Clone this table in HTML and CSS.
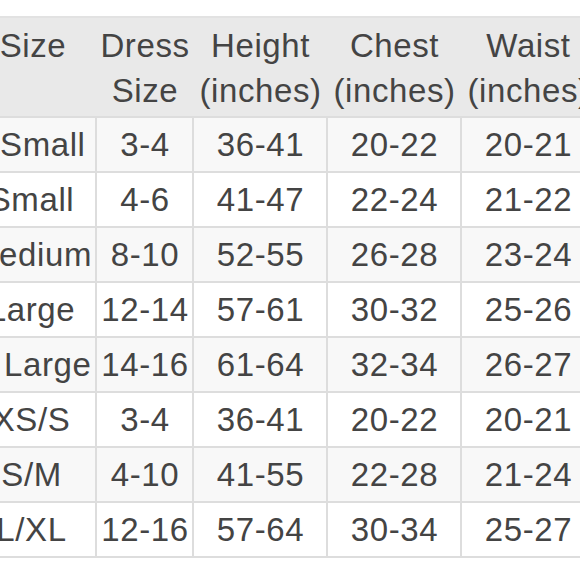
FILE: index.html
```html
<!DOCTYPE html>
<html>
<head>
<meta charset="utf-8">
<link rel="stylesheet" href="styles.css">
</head>
<body>
<div class="viewport">
<table class="chart">
  <colgroup>
    <col class="c1"><col class="c2"><col class="c3"><col class="c4"><col class="c5">
  </colgroup>
  <thead>
    <tr>
      <th>Size</th>
      <th>Dress<br>Size</th>
      <th>Height<br>(inches)</th>
      <th>Chest<br>(inches)</th>
      <th>Waist<br>(inches)</th>
    </tr>
  </thead>
  <tbody>
    <tr><td>XSmall</td><td>3-4</td><td>36-41</td><td>20-22</td><td>20-21</td></tr>
    <tr><td>Small</td><td>4-6</td><td>41-47</td><td>22-24</td><td>21-22</td></tr>
    <tr><td>Medium</td><td>8-10</td><td>52-55</td><td>26-28</td><td>23-24</td></tr>
    <tr><td>Large</td><td>12-14</td><td>57-61</td><td>30-32</td><td>25-26</td></tr>
    <tr><td>X Large</td><td>14-16</td><td>61-64</td><td>32-34</td><td>26-27</td></tr>
    <tr><td>XS/S</td><td>3-4</td><td>36-41</td><td>20-22</td><td>20-21</td></tr>
    <tr><td>S/M</td><td>4-10</td><td>41-55</td><td>22-28</td><td>21-24</td></tr>
    <tr><td>L/XL</td><td>12-16</td><td>57-64</td><td>30-34</td><td>25-27</td></tr>
  </tbody>
</table>
</div>
</body>
</html>
```
FILE: styles.css
```css
html, body {
  margin: 0;
  padding: 0;
  background: #ffffff;
}
.viewport {
  width: 580px;
  height: 580px;
  overflow: hidden;
  padding-top: 16px;
  box-sizing: border-box;
}
.chart {
  border-collapse: collapse;
  table-layout: fixed;
  width: 629px;
  margin-left: -35px;
  font-family: "Liberation Sans", Arial, sans-serif;
  font-size: 33px;
  letter-spacing: 0.6px;
  color: #444444;
}
.c1 { width: 130px; }
.c2 { width: 97px; }
.c3 { width: 134px; }
.c4 { width: 134px; }
.c5 { width: 134px; }
.chart th {
  background: #e9e9e9;
  font-weight: normal;
  line-height: 45px;
  padding: 5px 0 3px 1px;
  vertical-align: top;
  text-align: center;
  border-top: 2px solid #e2e2e2;
  border-bottom: 2px solid #dddddd;
  white-space: nowrap;
}
.chart th:first-child {
  padding-left: 4px;
}
.chart td {
  height: 53px;
  padding: 0 0 0 1px;
  text-align: center;
  vertical-align: middle;
  border: 2px solid #dddddd;
  white-space: nowrap;
  line-height: 40px;
}
.chart tbody tr:nth-child(odd) td {
  background: #f8f8f8;
}
.chart tbody tr:nth-child(even) td {
  background: #ffffff;
}
```
